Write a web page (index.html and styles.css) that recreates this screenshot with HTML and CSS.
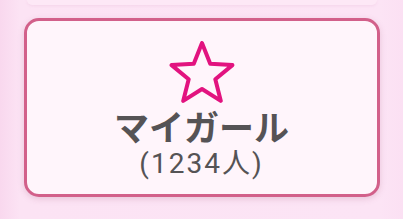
FILE: index.html
```html
<!DOCTYPE html>
<html lang="ja">
<head>
<meta charset="utf-8">
<link rel="stylesheet" href="styles.css">
</head>
<body>
<div class="page">
  <div class="prev-card"></div>
  <div class="card">
    <svg class="star" width="66" height="62" viewBox="-33 -34 66 62" aria-hidden="true">
      <polygon points="0,-32 8.23,-11.33 30.43,-9.89 13.31,4.33 18.81,25.89 0,14 -18.81,25.89 -13.31,4.33 -30.43,-9.89 -8.23,-11.33" fill="none" stroke="#e2137f" stroke-width="4" stroke-linejoin="round"/>
    </svg>
    <div class="title">マイガール</div>
    <div class="count">(1234人)</div>
  </div>
</div>
</body>
</html>
```
FILE: styles.css
```css
html, body {
  margin: 0;
  padding: 0;
}
body {
  width: 403px;
  height: 219px;
  overflow: hidden;
  background: linear-gradient(90deg, #f9d8ee 0px, #fce3f4 20px, #fce4f5 380px, #fbe0f3 403px);
  font-family: "Noto Sans CJK JP", "Noto Sans", sans-serif;
}
.page {
  display: flex;
  flex-direction: column;
  align-items: center;
}
.prev-card {
  width: 350px;
  height: 5px;
  background: #fde8f6;
  box-shadow: 0 1px 3px rgba(220, 160, 200, 0.2);
  border-radius: 0 0 10px 10px;
}
.card {
  box-sizing: border-box;
  margin-top: 13px;
  width: 356px;
  height: 179px;
  border: 3px solid #d2608a;
  border-radius: 15px;
  background: #fff5fb;
  box-shadow: 0 2px 6px rgba(160, 80, 120, 0.22);
  display: flex;
  flex-direction: column;
  align-items: center;
  padding-top: 20px;
}
.star {
  display: block;
}
.title {
  margin-top: 3px;
  font-size: 35px;
  font-weight: 700;
  line-height: 40px;
  color: #555355;
}
.count {
  margin-top: 2px;
  font-family: Roboto, "Noto Sans CJK JP", sans-serif;
  font-size: 28px;
  font-weight: 400;
  line-height: 32px;
  letter-spacing: 2px;
  color: #555355;
}
```
